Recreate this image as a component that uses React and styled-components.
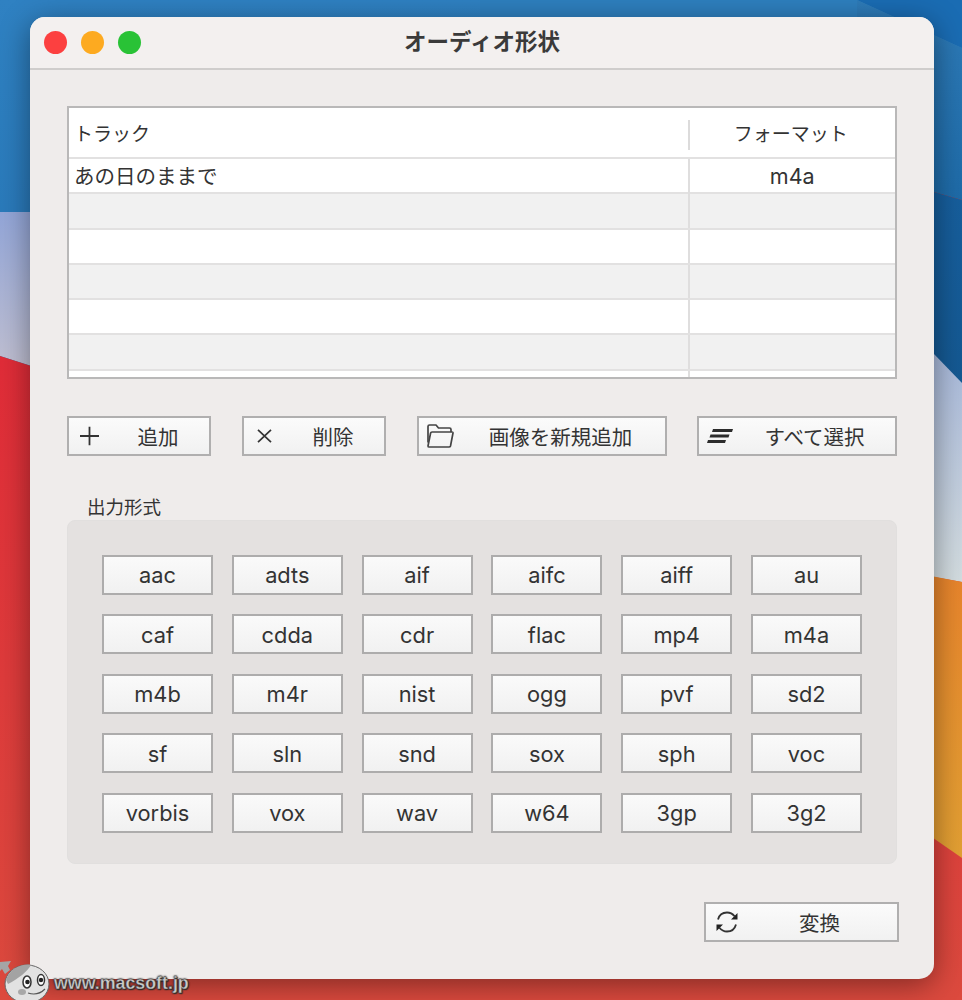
import React from "react";
import styled, { createGlobalStyle } from "styled-components";

const Global = createGlobalStyle`
  html, body { margin: 0; padding: 0; background: #c8322e; }
  * { box-sizing: border-box; }
`;

const JP = `"Inter", "Noto Sans CJK JP", sans-serif`;

const Page = styled.div`
  position: relative;
  width: 962px;
  height: 1000px;
  overflow: hidden;
  padding: 17px 28px 21px 30px;
  font-family: ${JP};
  color: #333;
`;
const Wallpaper = styled.svg`
  position: absolute;
  inset: 0;
`;
const Window = styled.div`
  position: relative;
  height: 962px;
  background: #efeceb;
  border-radius: 15px;
  box-shadow: 0 6px 30px rgba(0, 0, 0, 0.42);
  display: flex;
  flex-direction: column;
  overflow: hidden;
`;
const TitleBar = styled.header`
  position: relative;
  flex: none;
  height: 53px;
  background: #f3f0ef;
  border-bottom: 2px solid #cfcdcc;
  display: flex;
  align-items: center;
  justify-content: center;
  padding-bottom: 6px;
`;
const Title = styled.h1`
  margin: 0;
  font-size: 22.5px;
  font-weight: 700;
  color: #3a3a3a;
`;
const Lights = styled.div`
  position: absolute;
  left: 14px;
  top: 14px;
  display: flex;
  gap: 14px;
`;
const Light = styled.span`
  width: 23px;
  height: 23px;
  border-radius: 50%;
  background: ${p => p.$c};
`;
const Body = styled.div`
  flex: 1;
  display: flex;
  flex-direction: column;
  padding: 36px 37px 0 37px;
`;
const Table = styled.div`
  height: 273px;
  background: #fff;
  border: 2px solid #b9b8b8;
  overflow: hidden;
`;
const HeaderRow = styled.div`
  height: 51px;
  display: grid;
  grid-template-columns: 618.5px 1fr;
  border-bottom: 2px solid #e2e1e1;
  align-items: center;
  font-size: 19px;
`;
const HeadCell = styled.div`
  height: 30px;
  line-height: 30px;
  margin-top: 4px;
  padding: 0 ${p => (p.$center ? 3 : 0)}px 0 ${p => (p.$center ? 0 : 5)}px;
  text-align: ${p => (p.$center ? "center" : "left")};
  border-left: ${p => (p.$center ? "2px solid #dcdbdb" : "none")};
`;
const Row = styled.div`
  height: 35.3px;
  display: grid;
  grid-template-columns: 618.5px 1fr;
  background: ${p => (p.$alt ? "#f1f1f1" : "#fff")};
  border-bottom: 2px solid #e2e1e1;
`;
const Cell = styled.div`
  line-height: 35px;
  font-size: ${p => (p.$center ? 21.5 : 20.5)}px;
  padding-left: ${p => (p.$center ? 0 : 5)}px;
  text-align: ${p => (p.$center ? "center" : "left")};
  border-left: ${p => (p.$center ? "2px solid #dfdede" : "none")};
`;
const Actions = styled.div`
  display: flex;
  margin-top: 37px;
`;
const IconButton = styled.button`
  position: relative;
  width: ${p => p.$w}px;
  height: 40px;
  margin-left: ${p => p.$ml || 0}px;
  border: 2px solid #b0afaf;
  background: linear-gradient(#fbfbfb, #f1f1f1);
  font: inherit;
  font-size: 20.5px;
  color: #333;
  padding: 0 0 0 ${p => p.$pad}px;
  display: flex;
  align-items: center;
  justify-content: center;
`;
const IconSlot = styled.span`
  position: absolute;
  left: ${p => p.$left}px;
  top: 50%;
  transform: translateY(-50%);
  display: flex;
`;
const GroupLabel = styled.div`
  margin: 39px 0 0 20px;
  height: 25px;
  line-height: 25px;
  font-size: 18.5px;
`;
const Group = styled.section`
  height: 344px;
  background: #e4e1e0;
  border-radius: 8px;
  border: 1px solid #e1dfde;
  padding: 33.9px 34px 0;
  display: grid;
  grid-template-columns: repeat(6, 111px);
  grid-auto-rows: 40px;
  column-gap: 18.8px;
  row-gap: 19.5px;
`;
const FormatButton = styled.button`
  border: 2px solid #adacac;
  background: linear-gradient(#fafafa, #f1f1f1);
  font: inherit;
  font-size: 21.8px;
  color: #333;
  padding: 1px 0 0;
`;
const Footer = styled.div`
  display: flex;
  justify-content: flex-end;
  margin: 38px -2px 0 0;
`;
const Watermark = styled.div`
  position: absolute;
  left: 0;
  bottom: 0;
  height: 40px;
  width: 200px;
`;
const MarkText = styled.span`
  position: absolute;
  left: 54px;
  top: 13px;
  font-family: "Liberation Sans", sans-serif;
  font-weight: 700;
  font-size: 17.8px;
  color: #c9c9c9;
  -webkit-text-stroke: 0.3px #444;
  text-shadow: 0 0 2px #222, 0 0 2px #222, 1px 1px 1px #333;
`;

const Plus = () => (
  <svg width="19" height="19" viewBox="0 0 19 19" fill="none" stroke="#333" strokeWidth="1.8"><path d="M9.500 0v19M0 9.500h19" /></svg>
);
const Cross = () => (
  <svg width="15" height="14" viewBox="0 0 15 14" fill="none" stroke="#333" strokeWidth="1.7"><path d="M1 .8l13 12.400M14 .8L1 13.200" /></svg>
);
const Folder = () => (
  <svg width="28" height="25" viewBox="0 0 28 25" fill="none" stroke="#444" strokeWidth="1.7" strokeLinejoin="round">
    <path d="M2 19V3C2 2 2.700 1.500 3.500 1.500h6.500l2.500 3h11c1 0 1.500.6 1.500 1.500v2.500" />
    <path d="M2 22.500c0 .6.500 1 1.200 1h19.800c.8 0 1.300-.4 1.500-1L27 9.500c.1-.6-.3-1-1-1H6c-.7 0-1.200.3-1.400 1L2 22.500z" />
  </svg>
);
const Lines = () => (
  <svg width="26" height="16" viewBox="0 0 26 16" fill="#2c2c2c">
    <path d="M6 1h20l-1 3H5zM3.500 6.500h19l-1 3h-19zM1 12h18l-1 3H0z" />
  </svg>
);
const Sync = () => (
  <svg width="24" height="24" viewBox="0 0 24 24" fill="none">
    <path d="M3 9.500C4.200 5 7.800 2.500 12 2.500c3 0 5.600 1.300 7.600 3.800M21 14.500c-1.200 4.500-4.800 7-9 7-3 0-5.600-1.300-7.600-3.800" stroke="#333" strokeWidth="1.800" />
    <path d="M22.500 3v6.500H16zM1.500 21v-6.500H8z" fill="#222" />
  </svg>
);
const Mascot = () => (
  <svg width="54" height="40" viewBox="0 0 54 40">
    <path d="M0 2 L11 1 L8 6 L10 10 L5 14 L2 9 L0 11z" fill="#a5a5a5" />
    <ellipse cx="27" cy="24" rx="22" ry="19" fill="#e2e2e2" stroke="#666" />
    <path d="M6 20C9 8 24 3 31 5 C28 11 18 19 8 24z" fill="#a3a3a3" />
    <ellipse cx="27" cy="22" rx="4" ry="6" fill="#fff" stroke="#333" strokeWidth="1.500" />
    <ellipse cx="41" cy="20" rx="3.500" ry="5.500" fill="#fff" stroke="#333" strokeWidth="1.500" />
    <circle cx="27.500" cy="22" r="2.300" fill="#222" />
    <circle cx="41" cy="20" r="2.200" fill="#222" />
    <ellipse cx="22" cy="32" rx="4" ry="3" fill="#a8a8a8" />
    <path d="M28 33c6 2 12 1 17-4" stroke="#555" strokeWidth="1.200" fill="none" />
  </svg>
);

const rows = [0, 1, 2, 3, 4, 5, 6];
const formats = [
  "aac","adts","aif","aifc","aiff","au",
  "caf","cdda","cdr","flac","mp4","m4a",
  "m4b","m4r","nist","ogg","pvf","sd2",
  "sf","sln","snd","sox","sph","voc",
  "vorbis","vox","wav","w64","3gp","3g2",
];

export default function App() {
  return (
    <Page>
      <Global />
      <Wallpaper width="962" height="1000" viewBox="0 0 962 1000">
        <defs>
          <linearGradient id="blue" x1="0" y1="0" x2="0" y2="1">
            <stop offset="0" stopColor="#2f81c2" />
            <stop offset="1" stopColor="#17609f" />
          </linearGradient>
          <linearGradient id="band" x1="0" y1="0" x2="0" y2="1">
            <stop offset="0" stopColor="#2e7bb8" />
            <stop offset="1" stopColor="#1e6ba8" />
          </linearGradient>
          <linearGradient id="deep" x1="0" y1="0" x2="0" y2="1">
            <stop offset="0" stopColor="#175f9e" />
            <stop offset="1" stopColor="#145891" />
          </linearGradient>
          <linearGradient id="red" x1="0" y1="0" x2="0" y2="1">
            <stop offset="0" stopColor="#e02c38" />
            <stop offset="1" stopColor="#dc4a3e" />
          </linearGradient>
          <linearGradient id="hazeLeft" x1="0" y1="0" x2="0" y2="1">
            <stop offset="0" stopColor="#93a6d8" />
            <stop offset="1" stopColor="#cfc8cf" />
          </linearGradient>
          <linearGradient id="hazeRight" x1="0" y1="0" x2="0" y2="1">
            <stop offset="0" stopColor="#8da2d6" />
            <stop offset="1" stopColor="#d4dde0" />
          </linearGradient>
          <linearGradient id="orange" x1="0" y1="0" x2="0" y2="1">
            <stop offset="0" stopColor="#e8842c" />
            <stop offset="1" stopColor="#e2a033" />
          </linearGradient>
        </defs>
        <rect width="480" height="1000" fill="url(#blue)" />
        <rect x="480" width="482" height="60" fill="#2e7fbe" />
        <path d="M857 0 L962 0 L962 48z" fill="#1a6cb3" />
        <path d="M857 0 L962 48 L962 200 L857 170z" fill="url(#band)" />
        <path d="M857 170 L962 200 L962 390 L857 390z" fill="url(#deep)" />
        <path d="M0 212 L200 212 L200 420 L0 356z" fill="url(#hazeLeft)" />
        <path d="M0 356 L200 420 L200 1000 L0 1000z" fill="url(#red)" />
        <path d="M200 212 L934 354 L962 383 L962 585 L200 585z" fill="url(#hazeRight)" />
        <path d="M200 420 L934 577 L962 582 L962 1000 L200 1000z" fill="url(#red)" />
        <path d="M900 570 L962 582 L962 858 L900 815z" fill="url(#orange)" />
      </Wallpaper>
      <Window>
        <TitleBar>
          <Lights>
            <Light $c="#fc4040" />
            <Light $c="#fdaa20" />
            <Light $c="#29c236" />
          </Lights>
          <Title>オーディオ形状</Title>
        </TitleBar>
        <Body>
          <Table>
            <HeaderRow>
              <HeadCell>トラック</HeadCell>
              <HeadCell $center>フォーマット</HeadCell>
            </HeaderRow>
            {rows.map(i => (
              <Row key={i} $alt={i % 2 === 1}>
                <Cell>{i === 0 ? "あの日のままで" : ""}</Cell>
                <Cell $center>{i === 0 ? "m4a" : ""}</Cell>
              </Row>
            ))}
          </Table>
          <Actions>
            <IconButton $w={144} $pad={38}><IconSlot $left={11}><Plus /></IconSlot>追加</IconButton>
            <IconButton $w={144} $ml={31} $pad={38}><IconSlot $left={13}><Cross /></IconSlot>削除</IconButton>
            <IconButton $w={250} $ml={31} $pad={37}><IconSlot $left={7}><Folder /></IconSlot>画像を新規追加</IconButton>
            <IconButton $w={200} $ml={30} $pad={35}><IconSlot $left={8}><Lines /></IconSlot>すべて選択</IconButton>
          </Actions>
          <GroupLabel>出力形式</GroupLabel>
          <Group>
            {formats.map(f => <FormatButton key={f}>{f}</FormatButton>)}
          </Group>
          <Footer>
            <IconButton $w={195} $pad={36}><IconSlot $left={9}><Sync /></IconSlot>変換</IconButton>
          </Footer>
        </Body>
      </Window>
      <Watermark>
        <Mascot />
        <MarkText>www.macsoft.jp</MarkText>
      </Watermark>
    </Page>
  );
}
